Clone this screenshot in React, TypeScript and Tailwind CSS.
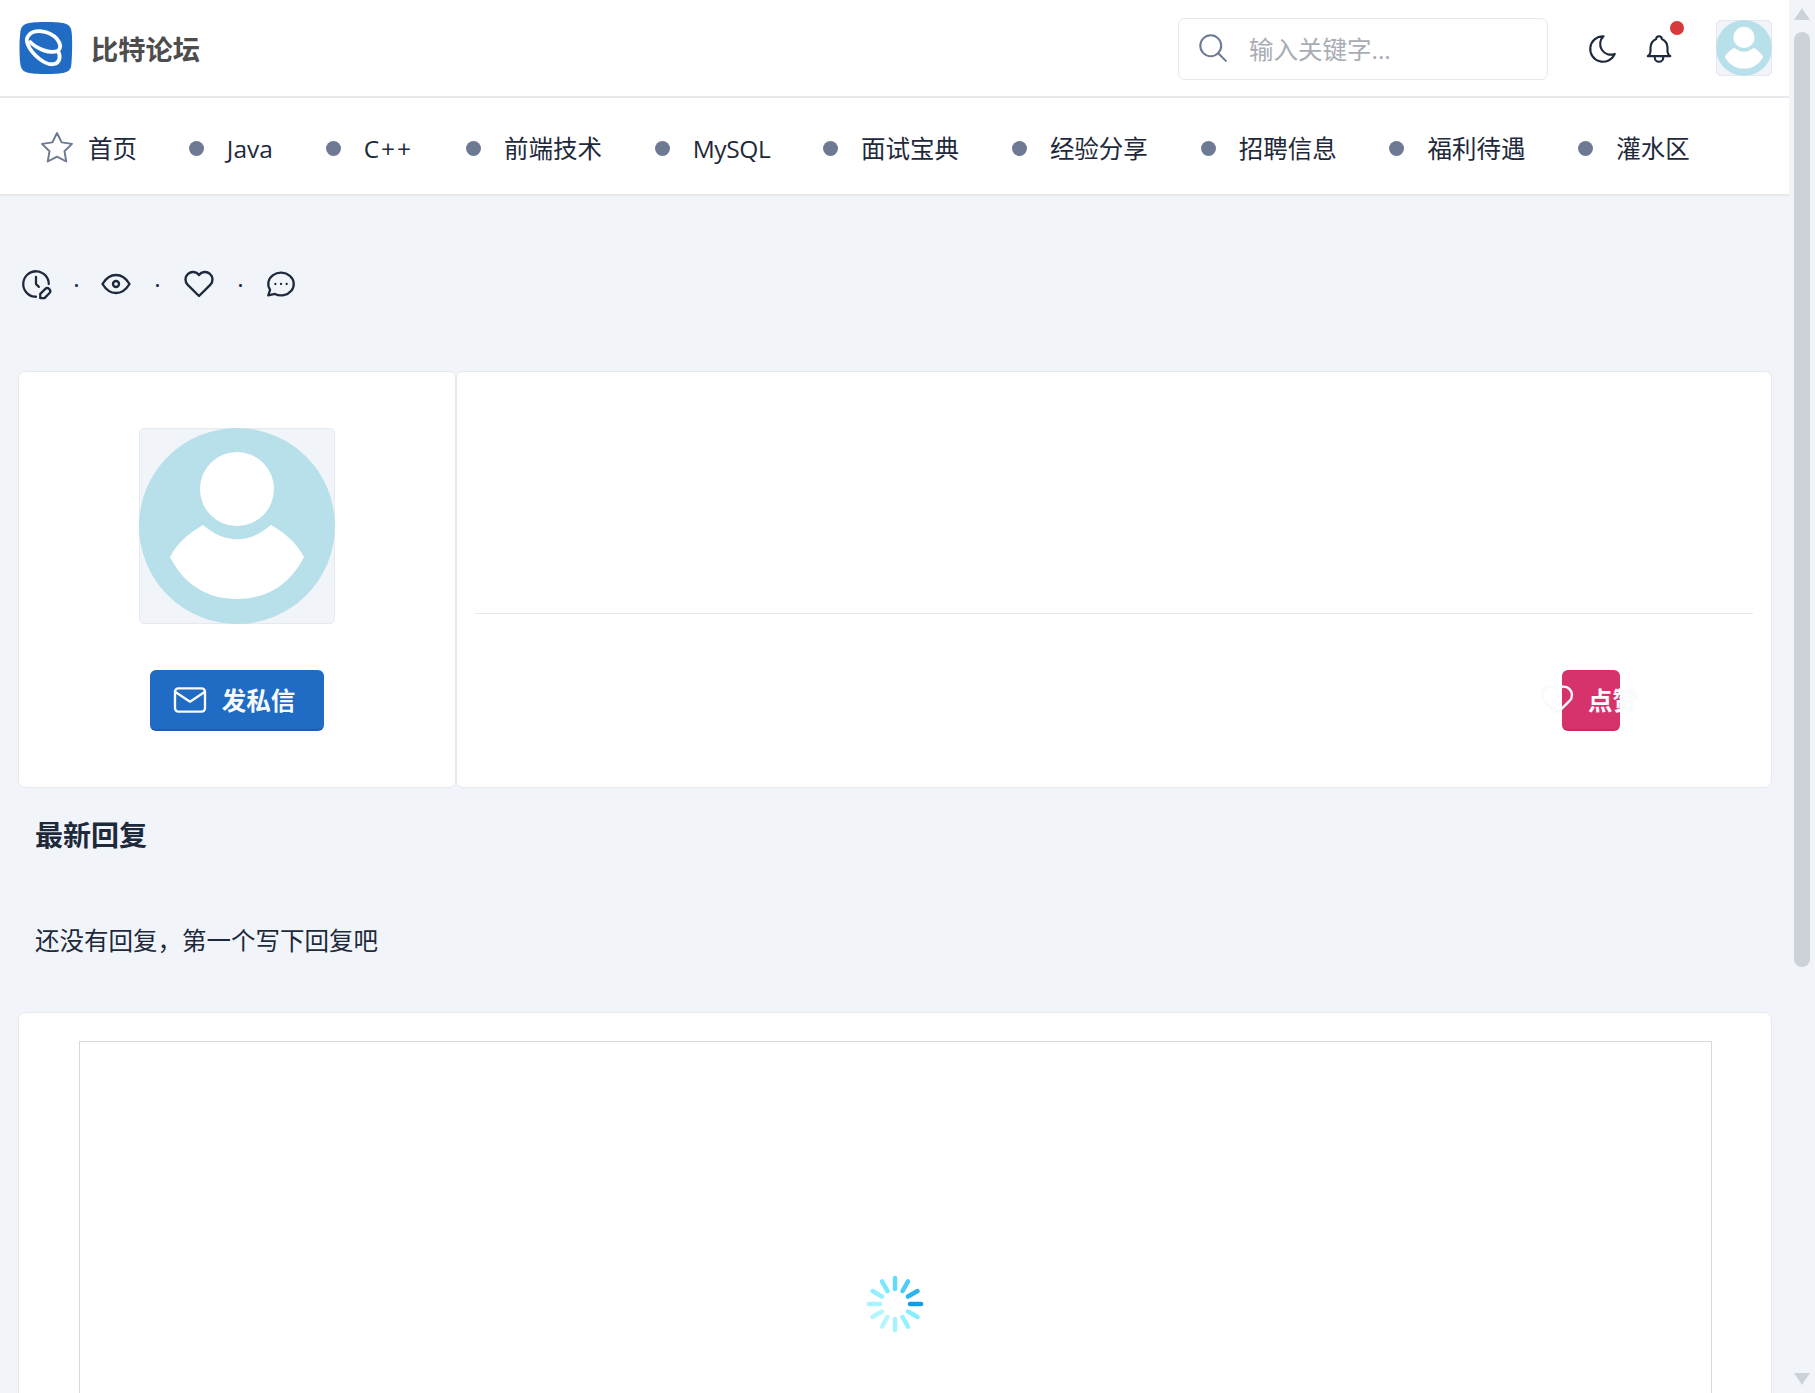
const font = "font-['Open_Sans','Noto_Sans_CJK_SC',sans-serif]";

const navItems = [
  { label: "Java", cls: "" },
  { label: "C++", cls: "tracking-[2px]" },
  { label: "前端技术", cls: "" },
  { label: "MySQL", cls: "tracking-[-0.4px]" },
  { label: "面试宝典", cls: "" },
  { label: "经验分享", cls: "" },
  { label: "招聘信息", cls: "" },
  { label: "福利待遇", cls: "" },
  { label: "灌水区", cls: "" },
];

function Logo() {
  return (
    <svg width="54" height="54" viewBox="0 0 54 54" className="shrink-0">
      <path d="M27 1C44 1 50 2 52 8C54 14 53 40 52 46C50 52 44 53 27 53C10 53 4 52 2 46C0 40 0 14 2 8C4 2 10 1 27 1Z" fill="#206bc4" />
      <g fill="none" stroke="#fff" strokeWidth="3.8" strokeLinejoin="round">
        <path d="M10 14C15 8 30 9 38 18C42 23 42 27 39 30C42 35 41 42 35 43C26 45 13 33 9 24C7 20 7 17 10 14Z" />
        <path d="M10 20C18 28 30 33 39 30" />
      </g>
    </svg>
  );
}

function Avatar({ size }: { size: number }) {
  return (
    <div className="shrink-0 rounded-[5px] border border-[#e6e9ee] bg-[#f1f5f9]" style={{ width: size, height: size }}>
      <svg viewBox="0 0 196 196" className="-m-px block h-[calc(100%+2px)] w-[calc(100%+2px)]">
        <circle cx="98" cy="98" r="98" fill="#b8e0ea" />
        <circle cx="98" cy="61" r="37" fill="#fff" />
        <path d="M64 97C86 116 110 116 132 97C148 106 158 116 165 129C151 157 127 171 98 171C69 171 45 157 31 129C38 116 48 106 64 97Z" fill="#fff" />
      </svg>
    </div>
  );
}

function Spinner() {
  const colors = ["#0a9fe6", "#2bb5ee", "#4fcdf7", "#62dcfb", "#78e8fd", "#95f0fe", "#abf4fe", "#b5f5fe", "#b5f5fe", "#a5f3fd", "#95f0fe", "#8aeefe"];
  return (
    <svg width="60" height="60" viewBox="0 0 60 60">
      {colors.map((c, i) => (
        <line key={i} x1="45" y1="30" x2="56" y2="30" stroke={c} strokeWidth="4.5" strokeLinecap="round" transform={`rotate(${-i * 30} 30 30)`} />
      ))}
    </svg>
  );
}

function Dot() {
  return <span className="flex w-[47px] justify-center pt-[3px] leading-none text-[#1e293b]">·</span>;
}

export default function App() {
  return (
    <div className={`flex h-screen overflow-hidden bg-[#f1f5f9] text-[24.5px] text-[#1e293b] ${font}`}>
      <div className="min-w-0 flex-1">
        <header className="flex h-[98px] items-center border-b-2 border-[#e8e9eb] bg-white pl-[19px] pr-[17px]">
          <Logo />
          <span className="ml-[18px] pt-[4px] text-[27.25px] font-semibold text-[#4d4d4d]">比特论坛</span>
          <div className="ml-auto mt-[1px] flex h-[62px] w-[370px] items-center rounded-[7px] border border-[#e6e8eb] pl-[18px]">
            <svg width="33" height="33" viewBox="0 0 24 24" fill="none" stroke="#6e7a94" strokeWidth="1.5" strokeLinecap="round" strokeLinejoin="round">
              <circle cx="10" cy="10" r="7.6" />
              <path d="M21 21l-5.6-5.6" />
            </svg>
            <span className="ml-[19px] pt-[3px] text-[#a8adb5]">输入关键字...</span>
          </div>
          <svg className="ml-[38px] mt-[1px]" width="34" height="34" viewBox="0 0 24 24" fill="none" stroke="#1e293b" strokeWidth="1.5" strokeLinecap="round" strokeLinejoin="round">
            <path d="M12 3c.132 0 .263 0 .393 0a7.5 7.5 0 0 0 7.92 12.446a9 9 0 1 1 -8.313 -12.454z" />
          </svg>
          <div className="relative ml-[22px] mt-[1px]">
            <svg width="34" height="34" viewBox="0 0 24 24" fill="none" stroke="#1e293b" strokeWidth="1.5" strokeLinecap="round" strokeLinejoin="round" className="block">
              <path d="M10 5a2 2 0 1 1 4 0a7 7 0 0 1 4 6v3a4 4 0 0 0 2 3h-16a4 4 0 0 0 2 -3v-3a7 7 0 0 1 4 -6" />
              <path d="M9 17v1a3 3 0 0 0 6 0v-1" />
            </svg>
            <span className="absolute right-[-8px] top-[-11px] h-[14px] w-[14px] rounded-full bg-[#d63939]" />
          </div>
          <div className="ml-[40px]">
            <Avatar size={56} />
          </div>
        </header>

        <nav className="flex h-[98px] items-center border-b-2 border-[#e8e9eb] bg-white pl-[39px] pt-[4px]">
          <svg width="36" height="36" viewBox="0 0 24 24" fill="none" stroke="#6e7a94" strokeWidth="1.3" strokeLinecap="round" strokeLinejoin="round">
            <path d="M12 17.75l-6.172 3.245l1.179 -6.873l-5 -4.867l6.9 -1l3.086 -6.253l3.086 6.253l6.9 1l-5 4.867l1.179 6.873z" />
          </svg>
          <span className="ml-[13px] mr-[-1px] pt-[3px]">首页</span>
          {navItems.map((item) => (
            <div key={item.label} className="ml-[52.8px] flex items-center">
              <span className="h-[15px] w-[15px] rounded-full bg-[#6e7a94]" />
              <span className={`ml-[23px] pt-[3px] ${item.cls}`}>{item.label}</span>
            </div>
          ))}
        </nav>

        <main className="pl-[18px] pr-[17px]">
          <div className="flex h-[175px] items-center pl-[1px] pt-[1px]">
            <svg className="shrink-0" width="34" height="34" viewBox="0 0 24 24" fill="none" stroke="#1e293b" strokeWidth="1.6" strokeLinecap="round" strokeLinejoin="round">
              <path d="M21 12a9 9 0 1 0 -9.972 8.948c.32 .034 .644 .052 .972 .052" />
              <path d="M12 7v5l2 2" />
              <path d="M18.42 15.61a2.1 2.1 0 0 1 2.97 2.97l-3.39 3.42h-3v-3l3.42 -3.39z" />
            </svg>
            <Dot />
            <svg className="ml-[-2px] shrink-0" width="36" height="36" viewBox="0 0 24 24" fill="none" stroke="#1e293b" strokeWidth="1.6" strokeLinecap="round" strokeLinejoin="round">
              <path d="M10 12a2 2 0 1 0 4 0a2 2 0 0 0 -4 0" />
              <path d="M21 12c-2.4 4 -5.4 6 -9 6c-3.6 0 -6.6 -2 -9 -6c2.4 -4 5.4 -6 9 -6c3.6 0 6.6 2 9 6" />
            </svg>
            <Dot />
            <svg className="shrink-0" width="36" height="36" viewBox="0 0 24 24" fill="none" stroke="#1e293b" strokeWidth="1.6" strokeLinecap="round" strokeLinejoin="round">
              <path d="M19.5 12.572l-7.5 7.428l-7.5 -7.428a5 5 0 1 1 7.5 -6.566a5 5 0 1 1 7.5 6.572" />
            </svg>
            <Dot />
            <svg className="shrink-0" width="34" height="34" viewBox="0 0 24 24" fill="none" stroke="#1e293b" strokeWidth="1.6" strokeLinecap="round" strokeLinejoin="round">
              <path d="M3 20l1.3 -3.9c-2.324 -3.437 -1.426 -7.872 2.1 -10.374c3.526 -2.501 8.59 -2.296 11.845 .48c3.255 2.777 3.695 7.266 1.029 10.501c-2.666 3.235 -7.615 4.215 -11.574 2.293l-4.7 1" />
              <path d="M8 12h.01M12 12h.01M16 12h.01" />
            </svg>
          </div>

          <div className="flex h-[417px]">
            <div className="flex w-[438px] shrink-0 flex-col items-center rounded-[7px] border border-[#e6e8eb] bg-white pt-[56px]">
              <Avatar size={196} />
              <button className="mt-[46px] flex h-[61px] w-[174px] items-center justify-center rounded-[6px] border-b-2 border-[#1c5fae] bg-[#206bc4] pr-[9px] font-semibold text-[#f8fafc]">
                <svg className="shrink-0" width="40" height="40" viewBox="0 0 24 24" fill="none" stroke="currentColor" strokeWidth="1.4" strokeLinecap="round" strokeLinejoin="round">
                  <path d="M3 7a2 2 0 0 1 2 -2h14a2 2 0 0 1 2 2v10a2 2 0 0 1 -2 2h-14a2 2 0 0 1 -2 -2v-10z" />
                  <path d="M3 7l9 6l9 -6" />
                </svg>
                <span className="ml-[12px] pt-[3px]">发私信</span>
              </button>
            </div>
            <div className="flex min-w-0 flex-1 flex-col rounded-[7px] border border-[#e6e8eb] bg-white px-[18px]">
              <div className="mt-[241px] border-t border-[#e6e8eb]" />
              <div className="mt-[56px] flex justify-end pr-[133px]">
                <button className="flex h-[61px] w-[58px] items-center justify-center whitespace-nowrap rounded-[6px] border-b-2 border-[#c02e63] bg-[#d6336c] pr-[8px] font-semibold text-[#f8fafc]">
                  <svg className="shrink-0" width="40" height="40" viewBox="0 0 24 24" fill="none" stroke="currentColor" strokeWidth="1.4" strokeLinecap="round" strokeLinejoin="round">
                    <path d="M19.5 12.572l-7.5 7.428l-7.5 -7.428a5 5 0 1 1 7.5 -6.566a5 5 0 1 1 7.5 6.572" />
                  </svg>
                  <span className="ml-[11px] shrink-0 pt-[3px]">点赞</span>
                </button>
              </div>
            </div>
          </div>

          <h3 className="ml-[17px] mt-[28px] text-[28px] font-bold leading-[38px]">最新回复</h3>
          <p className="ml-[17px] mt-[69px] leading-[36px]">还没有回复，第一个写下回复吧</p>

          <div className="mt-[53px] h-[600px] rounded-[7px] border border-[#e6e8eb] bg-white px-[59.5px] pt-[28px]">
            <div className="flex h-[600px] justify-center border border-[#d9d9d9] pt-[232px]">
              <Spinner />
            </div>
          </div>
        </main>
      </div>

      <div className="flex w-[26px] shrink-0 flex-col items-center pt-[8px]">
        <div className="h-0 w-0 border-x-[8px] border-b-[12px] border-x-transparent border-b-[#cdd1d9]" />
        <div className="mt-[12px] h-[935px] w-[16px] rounded-full bg-[#cdd1d9]" />
        <div className="mb-[8px] mt-auto h-0 w-0 border-x-[8px] border-t-[12px] border-x-transparent border-t-[#cdd1d9]" />
      </div>
    </div>
  );
}
